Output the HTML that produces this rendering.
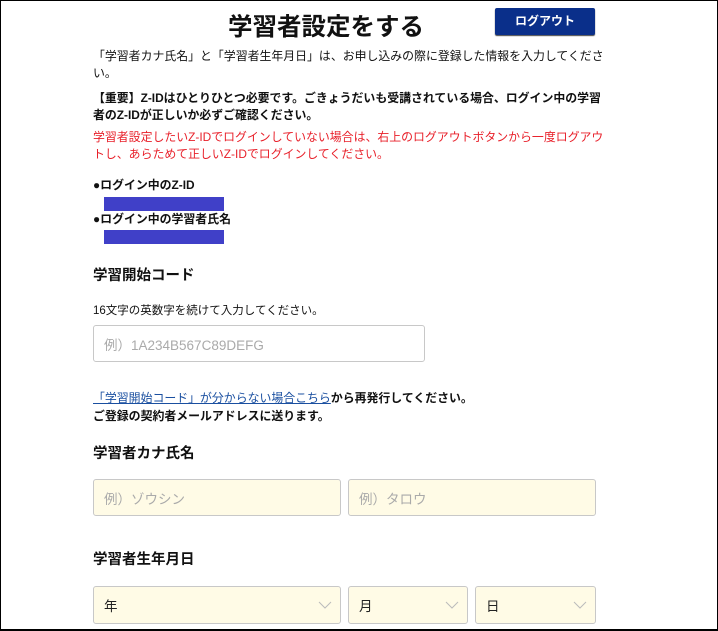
<!DOCTYPE html><html><head><meta charset="utf-8"><style>
body{margin:0;width:718px;height:630px;overflow:hidden;background:#fff;font-family:"Liberation Sans","Noto Sans CJK JP",sans-serif;color:#111}
.f{position:absolute;left:0;top:0;width:716px;height:628px;border:1px solid #000;border-bottom-width:2px}
.a{position:absolute;white-space:nowrap}
.t{font-size:11.9px;line-height:16.5px}
.b{font-weight:bold}
.bar{position:absolute;background:#4040c8;left:104px;width:120px;height:14px}
.in{position:absolute;border:1px solid #c8c8c8;border-radius:3px;background:#fffbe6;box-sizing:border-box;font-size:13.5px;color:#aaa;padding-left:10px;display:flex;align-items:center}
.sel{color:#222}
.sel svg{position:absolute;right:8px;top:50%;margin-top:-4px}
</style></head><body><div class="f"></div>
<div class="a b" style="left:228px;top:11px;font-size:24.5px;line-height:34px">学習者設定をする</div>
<div class="a b" style="left:495px;top:8px;width:100px;height:27px;background:#0a2f8a;border-radius:2px;color:#fff;font-size:12px;line-height:27px;text-align:center;box-shadow:0 1px 1px #444">ログアウト</div>
<div class="a t" style="left:93px;top:48px">「学習者カナ氏名」と「学習者生年月日」は、お申し込みの際に登録した情報を入力してくださ<br>い。</div>
<div class="a t b" style="left:93px;top:90px">【重要】Z-IDはひとりひとつ必要です。ごきょうだいも受講されている場合、ログイン中の学習<br>者のZ-IDが正しいか必ずご確認ください。</div>
<div class="a t" style="left:93px;top:129px;color:#e8202a">学習者設定したいZ-IDでログインしていない場合は、右上のログアウトボタンから一度ログアウ<br>トし、あらためて正しいZ-IDでログインしてください。</div>
<div class="a t b" style="left:93px;top:177px">●ログイン中のZ-ID</div>
<div class="bar" style="top:197px"></div>
<div class="a t b" style="left:93px;top:211px">●ログイン中の学習者氏名</div>
<div class="bar" style="top:230px"></div>
<div class="a b" style="left:93px;top:264px;font-size:14.5px">学習開始コード</div>
<div class="a" style="left:93px;top:302px;font-size:11.5px">16文字の英数字を続けて入力してください。</div>
<div class="in" style="left:93px;top:325px;width:332px;height:37px;background:#fff">例）1A234B567C89DEFG</div>
<div class="a t" style="left:93px;top:390px"><span style="color:#1a4fa0;text-decoration:underline">「学習開始コード」が分からない場合こちら</span><b>から再発行してください。</b></div>
<div class="a t b" style="left:93px;top:408px">ご登録の契約者メールアドレスに送ります。</div>
<div class="a b" style="left:93px;top:442px;font-size:14.5px">学習者カナ氏名</div>
<div class="in" style="left:93px;top:479px;width:248px;height:37px">例）ゾウシン</div>
<div class="in" style="left:348px;top:479px;width:248px;height:37px">例）タロウ</div>
<div class="a b" style="left:93px;top:548px;font-size:14.5px">学習者生年月日</div>
<div class="in sel" style="left:93px;top:586px;width:248px;height:38px">年<svg width="14" height="8"><path d="M1 1L7 7L13 1" fill="none" stroke="#bbb"/></svg></div>
<div class="in sel" style="left:348px;top:586px;width:120px;height:38px">月<svg width="14" height="8"><path d="M1 1L7 7L13 1" fill="none" stroke="#bbb"/></svg></div>
<div class="in sel" style="left:475px;top:586px;width:121px;height:38px">日<svg width="14" height="8"><path d="M1 1L7 7L13 1" fill="none" stroke="#bbb"/></svg></div>
</body></html>
